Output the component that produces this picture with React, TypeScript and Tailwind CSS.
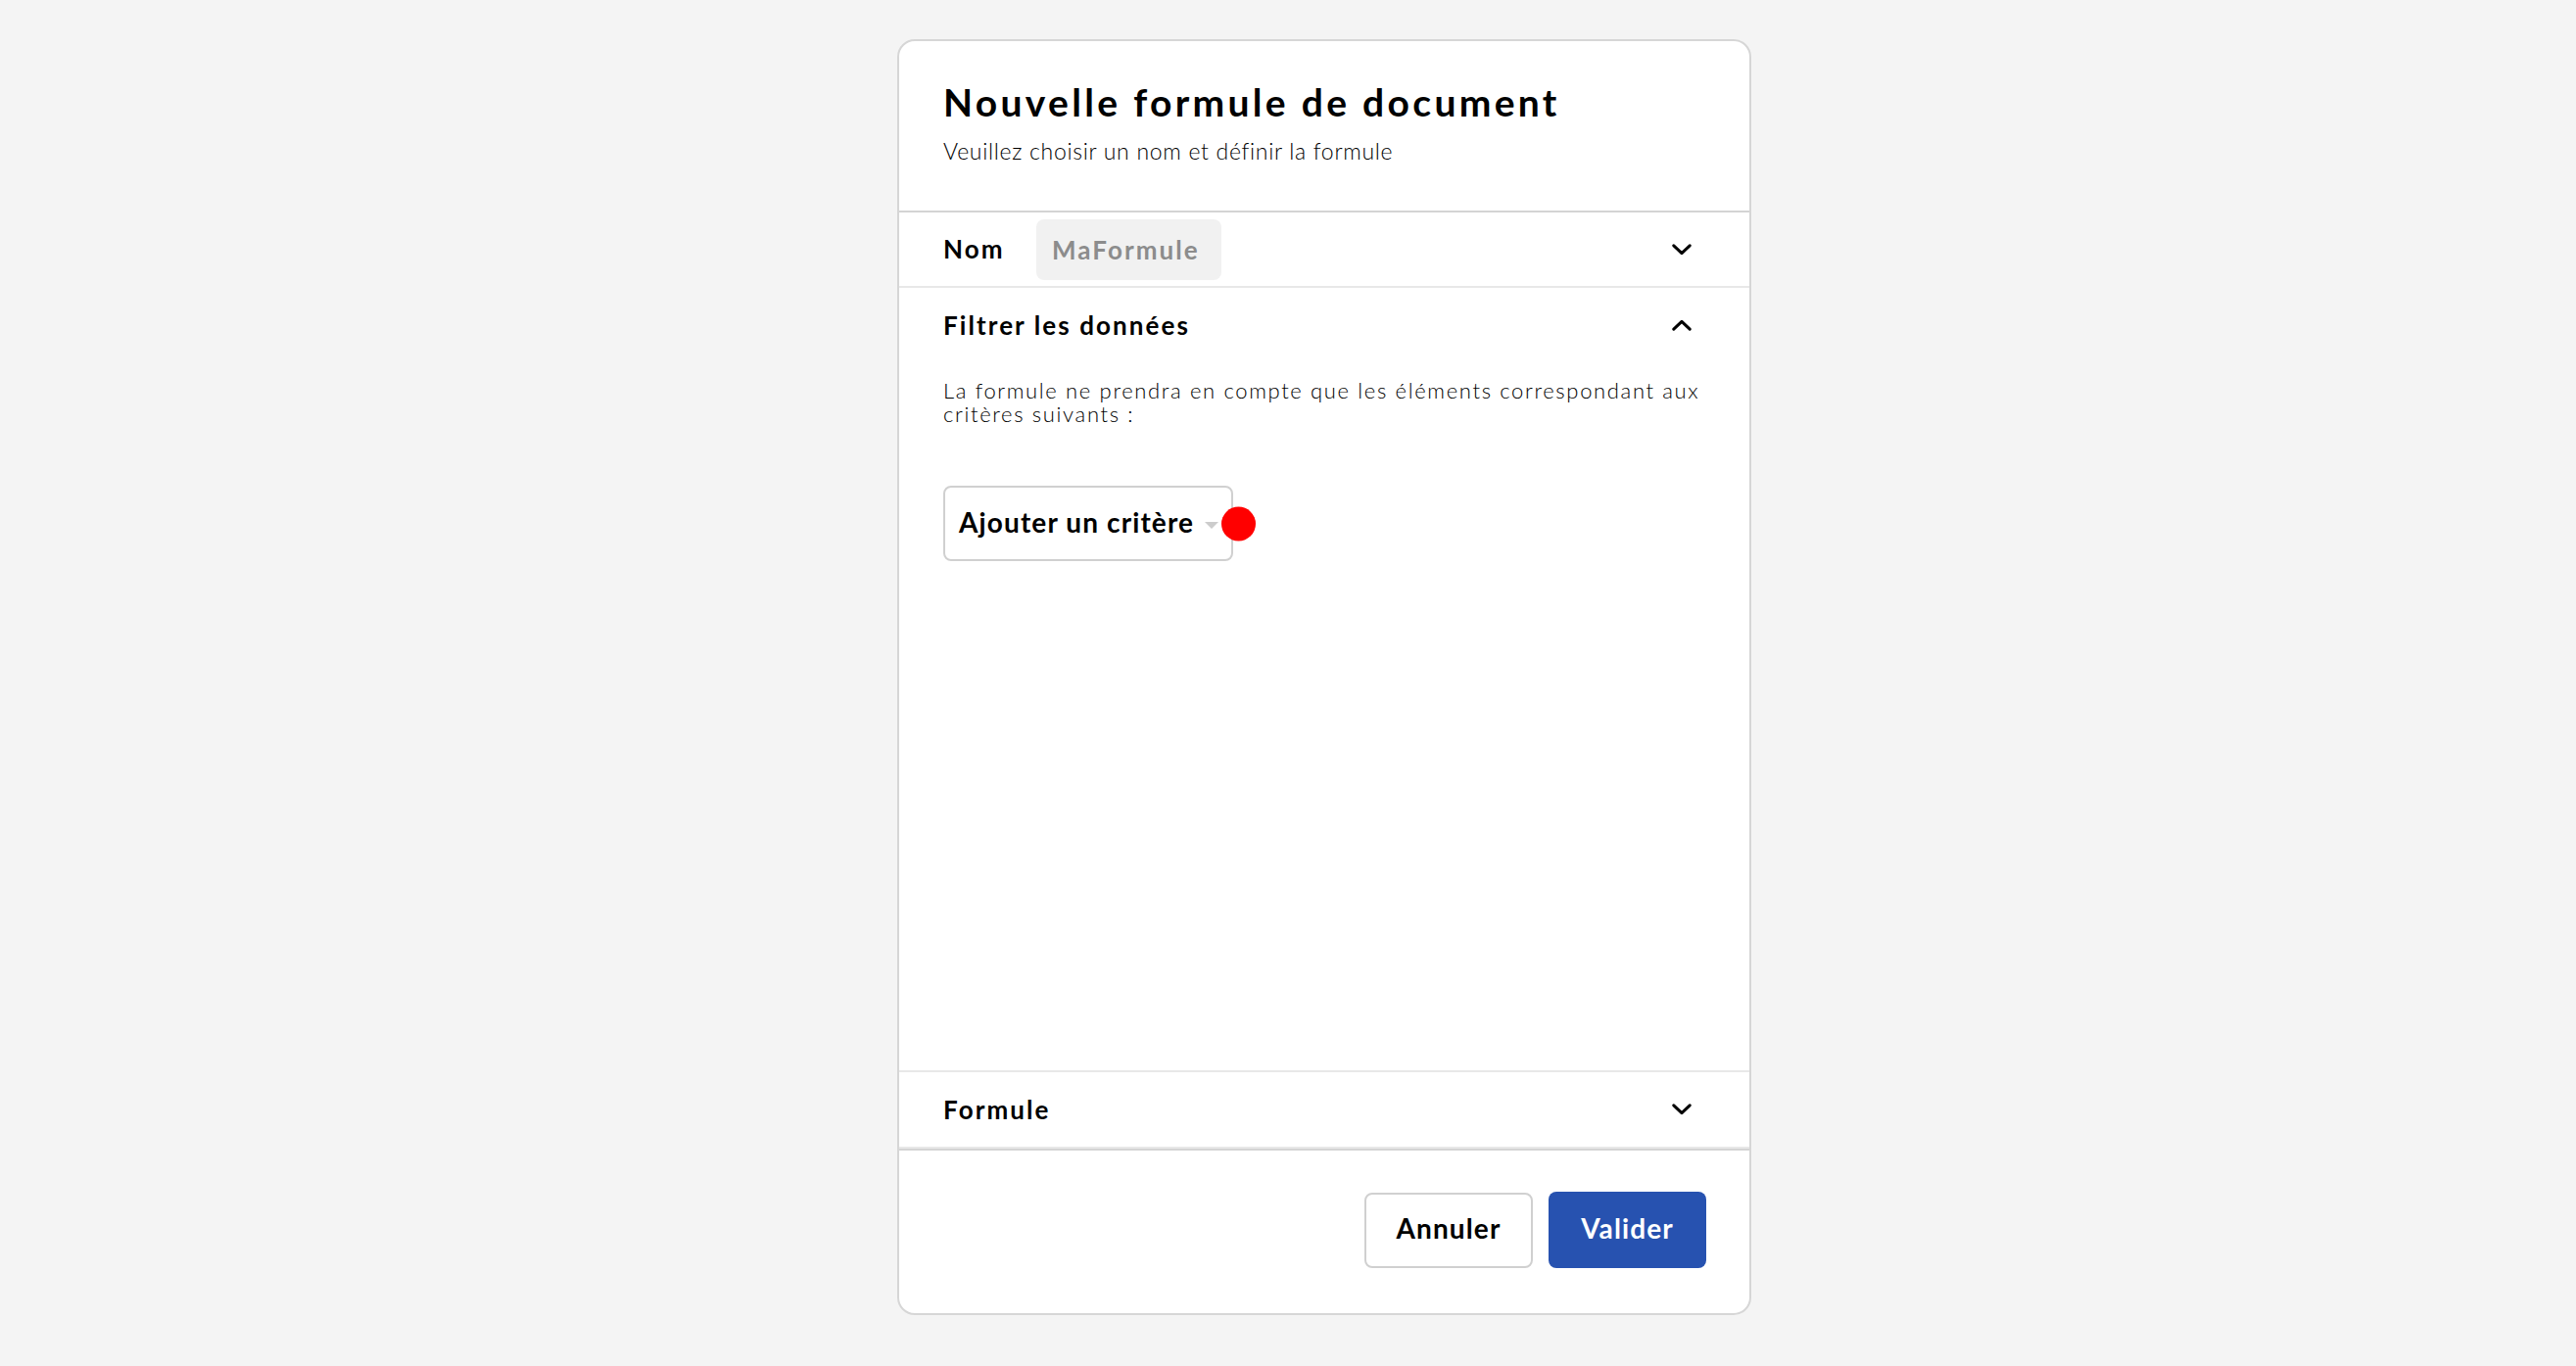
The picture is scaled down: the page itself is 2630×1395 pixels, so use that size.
import { useState } from "react";

const Chevron = ({ up = false }: { up?: boolean }) => (
  <svg
    width="20"
    height="12"
    viewBox="0 0 20 12"
    fill="none"
    className={up ? "rotate-180" : ""}
  >
    <polyline
      points="1.8,1.8 10,9.6 18.2,1.8"
      stroke="#000"
      strokeWidth="3"
      strokeLinecap="round"
      strokeLinejoin="round"
    />
  </svg>
);

export default function App() {
  const [name, setName] = useState("");

  return (
    <div className="min-h-screen w-full bg-[#f4f4f4] flex justify-center pt-[40px] pl-[74px] font-['Lato','Liberation_Sans',sans-serif] text-black">
      <div className="w-[872px] h-[1303px] bg-white border-2 border-[#d6d6d6] rounded-[18px] flex flex-col overflow-hidden">
        {/* Header */}
        <div className="h-[175px] shrink-0 border-b-2 border-[#d4d4d4] pl-[45px] pr-[45px] pt-[38px]">
          <h1 className="text-[39px] leading-[48px] font-bold tracking-[0.085em]">
            Nouvelle formule de document
          </h1>
          <p className="mt-[12px] text-[23px] leading-[28px] font-light tracking-[0.03em]">
            Veuillez choisir un nom et définir la formule
          </p>
        </div>

        {/* Nom */}
        <div className="h-[77px] shrink-0 border-b-2 border-[#e8e8e8] flex items-center pl-[45px] pr-[59px]">
          <span className="w-[95px] text-[26px] font-bold tracking-[0.08em]">Nom</span>
          <input
            value={name}
            onChange={(e) => setName(e.target.value)}
            placeholder="MaFormule"
            className="h-[62px] w-[189px] rounded-[8px] bg-[#f1f1f1] px-[16px] text-[26px] font-bold tracking-[0.08em] text-[#8c8c8c] placeholder:text-[#8c8c8c] outline-none"
          />
          <div className="ml-auto">
            <Chevron />
          </div>
        </div>

        {/* Filtrer les données */}
        <div className="flex-1 min-h-0 border-b-2 border-[#e8e8e8] flex flex-col pl-[45px] pr-[40px]">
          <div className="h-[76px] shrink-0 flex items-center pr-[19px]">
            <span className="text-[26px] font-bold tracking-[0.08em]">Filtrer les données</span>
            <div className="ml-auto">
              <Chevron up />
            </div>
          </div>
          <p className="mt-[17px] text-[22px] leading-[24px] font-light tracking-[0.075em]">
            La formule ne prendra en compte que les éléments correspondant aux critères suivants :
          </p>
          <div className="mt-[61px]">
            <button className="relative w-[296px] h-[77px] border-2 border-[#d0d0d0] rounded-[8px] flex items-center pl-[14px] pb-[4px] bg-white">
              <span className="text-[28px] font-bold tracking-[0.04em]">Ajouter un critère</span>
              <span className="ml-[11px] mt-[8px] w-0 h-0 border-l-[7px] border-r-[7px] border-t-[7px] border-l-transparent border-r-transparent border-t-[#cccccc]" />
              <span className="absolute left-[282px] top-1/2 -translate-y-1/2 w-[35px] h-[35px] rounded-full bg-[#ff0000]" />
            </button>
          </div>
        </div>

        {/* Formule */}
        <div className="h-[78px] shrink-0 border-b-2 border-[#e8e8e8] flex items-center pl-[45px] pr-[59px]">
          <span className="text-[26px] font-bold tracking-[0.08em]">Formule</span>
          <div className="ml-auto">
            <Chevron />
          </div>
        </div>

        {/* Footer */}
        <div className="h-[168px] shrink-0 border-t-2 border-[#d4d4d4] flex items-center justify-end gap-[16px] pr-[44px] pb-[4px]">
          <button className="w-[172px] h-[77px] border-2 border-[#d0d0d0] rounded-[8px] bg-white text-[28px] font-bold tracking-[0.04em] pb-[4px]">
            Annuler
          </button>
          <button className="w-[161px] h-[78px] rounded-[8px] bg-[#2752b0] text-white text-[28px] font-bold tracking-[0.04em] pb-[4px]">
            Valider
          </button>
        </div>
      </div>
    </div>
  );
}
